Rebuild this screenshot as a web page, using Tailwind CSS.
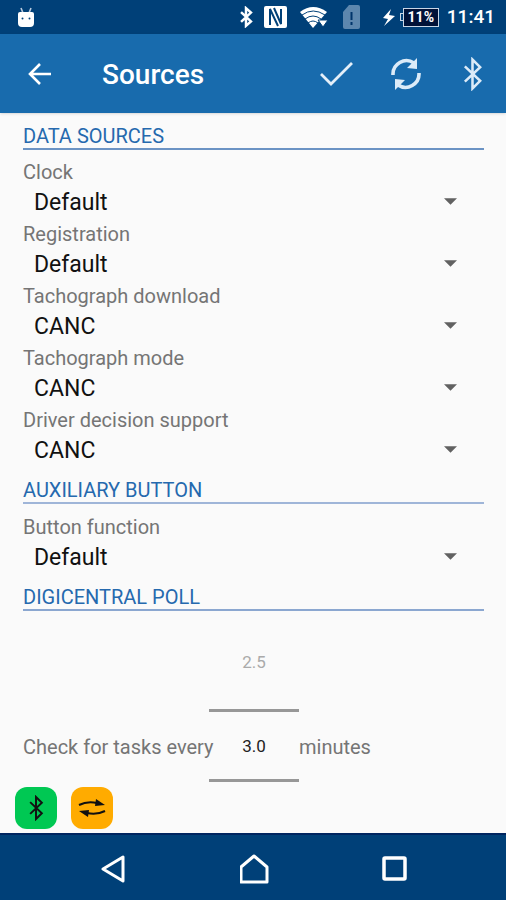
<!DOCTYPE html>
<html lang="en">
<head>
<meta charset="utf-8">
<meta name="viewport" content="width=device-width, initial-scale=1">
<title>Sources</title>
<script src="https://cdn.jsdelivr.net/npm/@tailwindcss/browser@4"></script>
</head>
<body class="flex min-h-screen flex-col bg-[#fafafa] font-['Roboto',sans-serif] text-[20px] leading-6 text-[#757575]">
<svg class="hidden" aria-hidden="true">
  <symbol id="bt" viewBox="0 0 24 40"><path d="M3 11 21 28 12 37V3l9 9L3 29" fill="none" stroke="currentColor" stroke-width="3"/></symbol>
  <symbol id="bt-bold" viewBox="0 0 24 40"><path d="M3 11 21 28 12 36V4l9 8L3 29" fill="none" stroke="currentColor" stroke-width="4.500"/></symbol>
  <symbol id="caret" viewBox="0 0 14 7"><path d="M0 0h14L7 7z" fill="currentColor"/></symbol>
</svg>

<div class="flex h-[34px] items-center bg-[#004078] pr-[11px] pl-[17px] text-white">
  <svg class="mr-auto h-5 w-[18px]" viewBox="0 0 18 20"><path d="M4 1l2 5M14 1l-2 5" stroke="#b9cbdf" stroke-width="1.6"/><path d="M1 7q0-2 2-2h12q2 0 2 2v9q0 4-4 4H5q-4 0-4-4z" fill="#fff"/><circle cx="5.500" cy="11.500" r="1" fill="#004078"/><circle cx="12.500" cy="11.500" r="1" fill="#004078"/></svg>
  <svg class="mr-[11px] h-[22px] w-[14px]"><use href="#bt-bold"/></svg>
  <svg class="mr-[12px] h-6 w-[23px]" viewBox="0 0 23 24"><rect y="1" width="23" height="22" rx="2" fill="#fff"/><path d="M6 20V4l8 17M10 3l7 16V4" fill="none" stroke="#004078" stroke-width="2"/></svg>
  <svg class="mr-[14px] h-6 w-[30px]" viewBox="0 0 30 24"><path d="M1 7Q14-3 28 7L14 23z" fill="#fff"/><path d="M3 10q11-8 23 0M6 14q8-6 16 0M9 18q5-4 10 0" fill="none" stroke="#004078" stroke-width="1"/><path d="M19 15h10l-5 7z" fill="#fff" stroke="#004078"/></svg>
  <svg class="mr-[23px] h-6 w-[17px]" viewBox="0 0 17 24"><path d="M6 0h9q2 0 2 2v20q0 2-2 2H2q-2 0-2-2V7z" fill="#5d87ae"/><path d="M8.500 7v8M8.500 17v3" stroke="#00356b" stroke-width="2"/></svg>
  <svg class="mr-[5px] h-[17px] w-[12px]" viewBox="0 0 12 17"><path d="M8 0 0 9l5 1-4 7 11-10-6-1z" fill="#fff"/></svg>
  <span class="h-2 w-[3px] border border-r-0 border-[#c8d6e6]"></span>
  <span class="mr-[8px] flex h-[19px] w-[36px] items-center justify-center border border-[#c8d6e6] bg-[#001238] text-[14px] font-bold">11%</span>
  <span class="text-[19px] font-medium">11:41</span>
</div>

<header class="flex h-[79px] items-center bg-[#186bad] pr-[23px] pl-[28px] text-white shadow">
  <button aria-label="Back"><svg class="h-6 w-6" viewBox="0 0 24 24"><path d="M23 12H3M12 2 2 12l10 10" fill="none" stroke="currentColor" stroke-width="2.600"/></svg></button>
  <h1 class="mr-auto ml-[50px] pt-[3px] text-[28px] leading-8 font-medium">Sources</h1>
  <button aria-label="Confirm" class="mr-[36px] text-[#e4eff9]"><svg class="h-7 w-[36px]" viewBox="0 0 36 28"><path d="M3 14l10 10L34 3" fill="none" stroke="currentColor" stroke-width="2.800"/></svg></button>
  <button aria-label="Refresh" class="mr-[40px] text-[#dcebf8]"><svg class="h-[34px] w-8" viewBox="0 0 32 34"><path d="M3 18A13.500 13.500 0 0 1 24 6M29 16A13.500 13.500 0 0 1 8 28" fill="none" stroke="currentColor" stroke-width="3.600"/><path d="M27 1v11l-10-1zM5 33V22l10 1z" fill="currentColor"/></svg></button>
  <button aria-label="Bluetooth" class="text-[#dcebf8]"><svg class="h-[34px] w-[21px]"><use href="#bt"/></svg></button>
</header>

<main class="flex-1 pt-[11px] pr-[22px] pl-[23px]">
  <section>
    <h2 class="border-b-2 border-[#6b93c4] text-[#2569ae]">DATA SOURCES</h2>
    <div class="flex flex-col gap-[2px] py-[10px]">
      <div><label for="clock" class="block">Clock</label><div class="relative text-[#616161]"><select id="clock" class="block h-9 w-full appearance-none pt-[2px] pl-[11px] text-[23px] text-[#111]"><option>Default</option></select><svg class="pointer-events-none absolute top-[14px] right-[27px] h-[7px] w-[13px]"><use href="#caret"/></svg></div></div>
      <div><label for="registration" class="block">Registration</label><div class="relative text-[#616161]"><select id="registration" class="block h-9 w-full appearance-none pt-[2px] pl-[11px] text-[23px] text-[#111]"><option>Default</option></select><svg class="pointer-events-none absolute top-[14px] right-[27px] h-[7px] w-[13px]"><use href="#caret"/></svg></div></div>
      <div><label for="download" class="block">Tachograph download</label><div class="relative text-[#616161]"><select id="download" class="block h-9 w-full appearance-none pt-[2px] pl-[11px] text-[23px] text-[#111]"><option>CANC</option></select><svg class="pointer-events-none absolute top-[14px] right-[27px] h-[7px] w-[13px]"><use href="#caret"/></svg></div></div>
      <div><label for="mode" class="block">Tachograph mode</label><div class="relative text-[#616161]"><select id="mode" class="block h-9 w-full appearance-none pt-[2px] pl-[11px] text-[23px] text-[#111]"><option>CANC</option></select><svg class="pointer-events-none absolute top-[14px] right-[27px] h-[7px] w-[13px]"><use href="#caret"/></svg></div></div>
      <div><label for="support" class="block">Driver decision support</label><div class="relative text-[#616161]"><select id="support" class="block h-9 w-full appearance-none pt-[2px] pl-[11px] text-[23px] text-[#111]"><option>CANC</option></select><svg class="pointer-events-none absolute top-[14px] right-[27px] h-[7px] w-[13px]"><use href="#caret"/></svg></div></div>
    </div>
  </section>
  <section>
    <h2 class="border-b-2 border-[#9fb5d8] text-[#2569ae]">AUXILIARY BUTTON</h2>
    <div class="pt-[11px] pb-[10px]"><label for="function" class="block">Button function</label><div class="relative text-[#616161]"><select id="function" class="block h-9 w-full appearance-none pt-[2px] pl-[11px] text-[23px] text-[#111]"><option>Default</option></select><svg class="pointer-events-none absolute top-[14px] right-[27px] h-[7px] w-[13px]"><use href="#caret"/></svg></div></div>
  </section>
  <section>
    <h2 class="border-b-2 border-[#8ba7d0] text-[#2569ae]">DIGICENTRAL POLL</h2>
    <div class="flex items-end">
      <label for="interval" class="mb-[23px] w-[186px] whitespace-nowrap">Check for tasks every</label>
      <div class="w-[90px] text-center text-[17px]">
        <button class="block h-[98px] w-full pt-[4px] text-[#aaa]">2.5</button>
        <input id="interval" value="3.0" class="block h-[73px] w-full border-y-3 border-[#979797] text-center text-[#222]">
      </div>
      <span class="mb-[23px]">minutes</span>
    </div>
  </section>
</main>

<div class="flex gap-[14px] px-[15px] pt-[5px] pb-[4px] text-[#111]">
  <button aria-label="Bluetooth status" class="flex size-[42px] items-center justify-center rounded-[12px] bg-[#00c853]"><svg class="h-[26px] w-[16px]"><use href="#bt"/></svg></button>
  <button aria-label="Transfer status" class="flex size-[42px] items-center justify-center rounded-[12px] bg-[#ffab00]"><svg class="h-[18px] w-7" viewBox="0 0 28 18"><path d="M1 6q8-4 18-2M27 12q-8 4-18 2" fill="none" stroke="currentColor" stroke-width="2"/><path d="M18 0l9 6-10 1zM10 18l-9-6 10-1z" fill="currentColor"/></svg></button>
</div>

<nav class="flex h-[67px] items-center justify-between border-t-2 border-[#002560] bg-[#004078] px-[99px] pt-[2px] text-white">
  <button aria-label="Back"><svg class="h-[28px] w-[28px]" viewBox="0 0 28 28"><path d="M24 2v24L4 14z" fill="none" stroke="currentColor" stroke-width="3" stroke-linejoin="round"/></svg></button>
  <button aria-label="Home"><svg class="h-[30px] w-[30px]" viewBox="0 0 30 30"><path d="M1 28V13L14 2l13 11v15z" fill="none" stroke="currentColor" stroke-width="3" stroke-linejoin="round"/></svg></button>
  <button aria-label="Recent apps"><svg class="h-[25px] w-[25px]" viewBox="0 0 25 25"><rect x="2" y="2" width="21" height="21" rx="1" fill="none" stroke="currentColor" stroke-width="3.500"/></svg></button>
</nav>
</body>
</html>
